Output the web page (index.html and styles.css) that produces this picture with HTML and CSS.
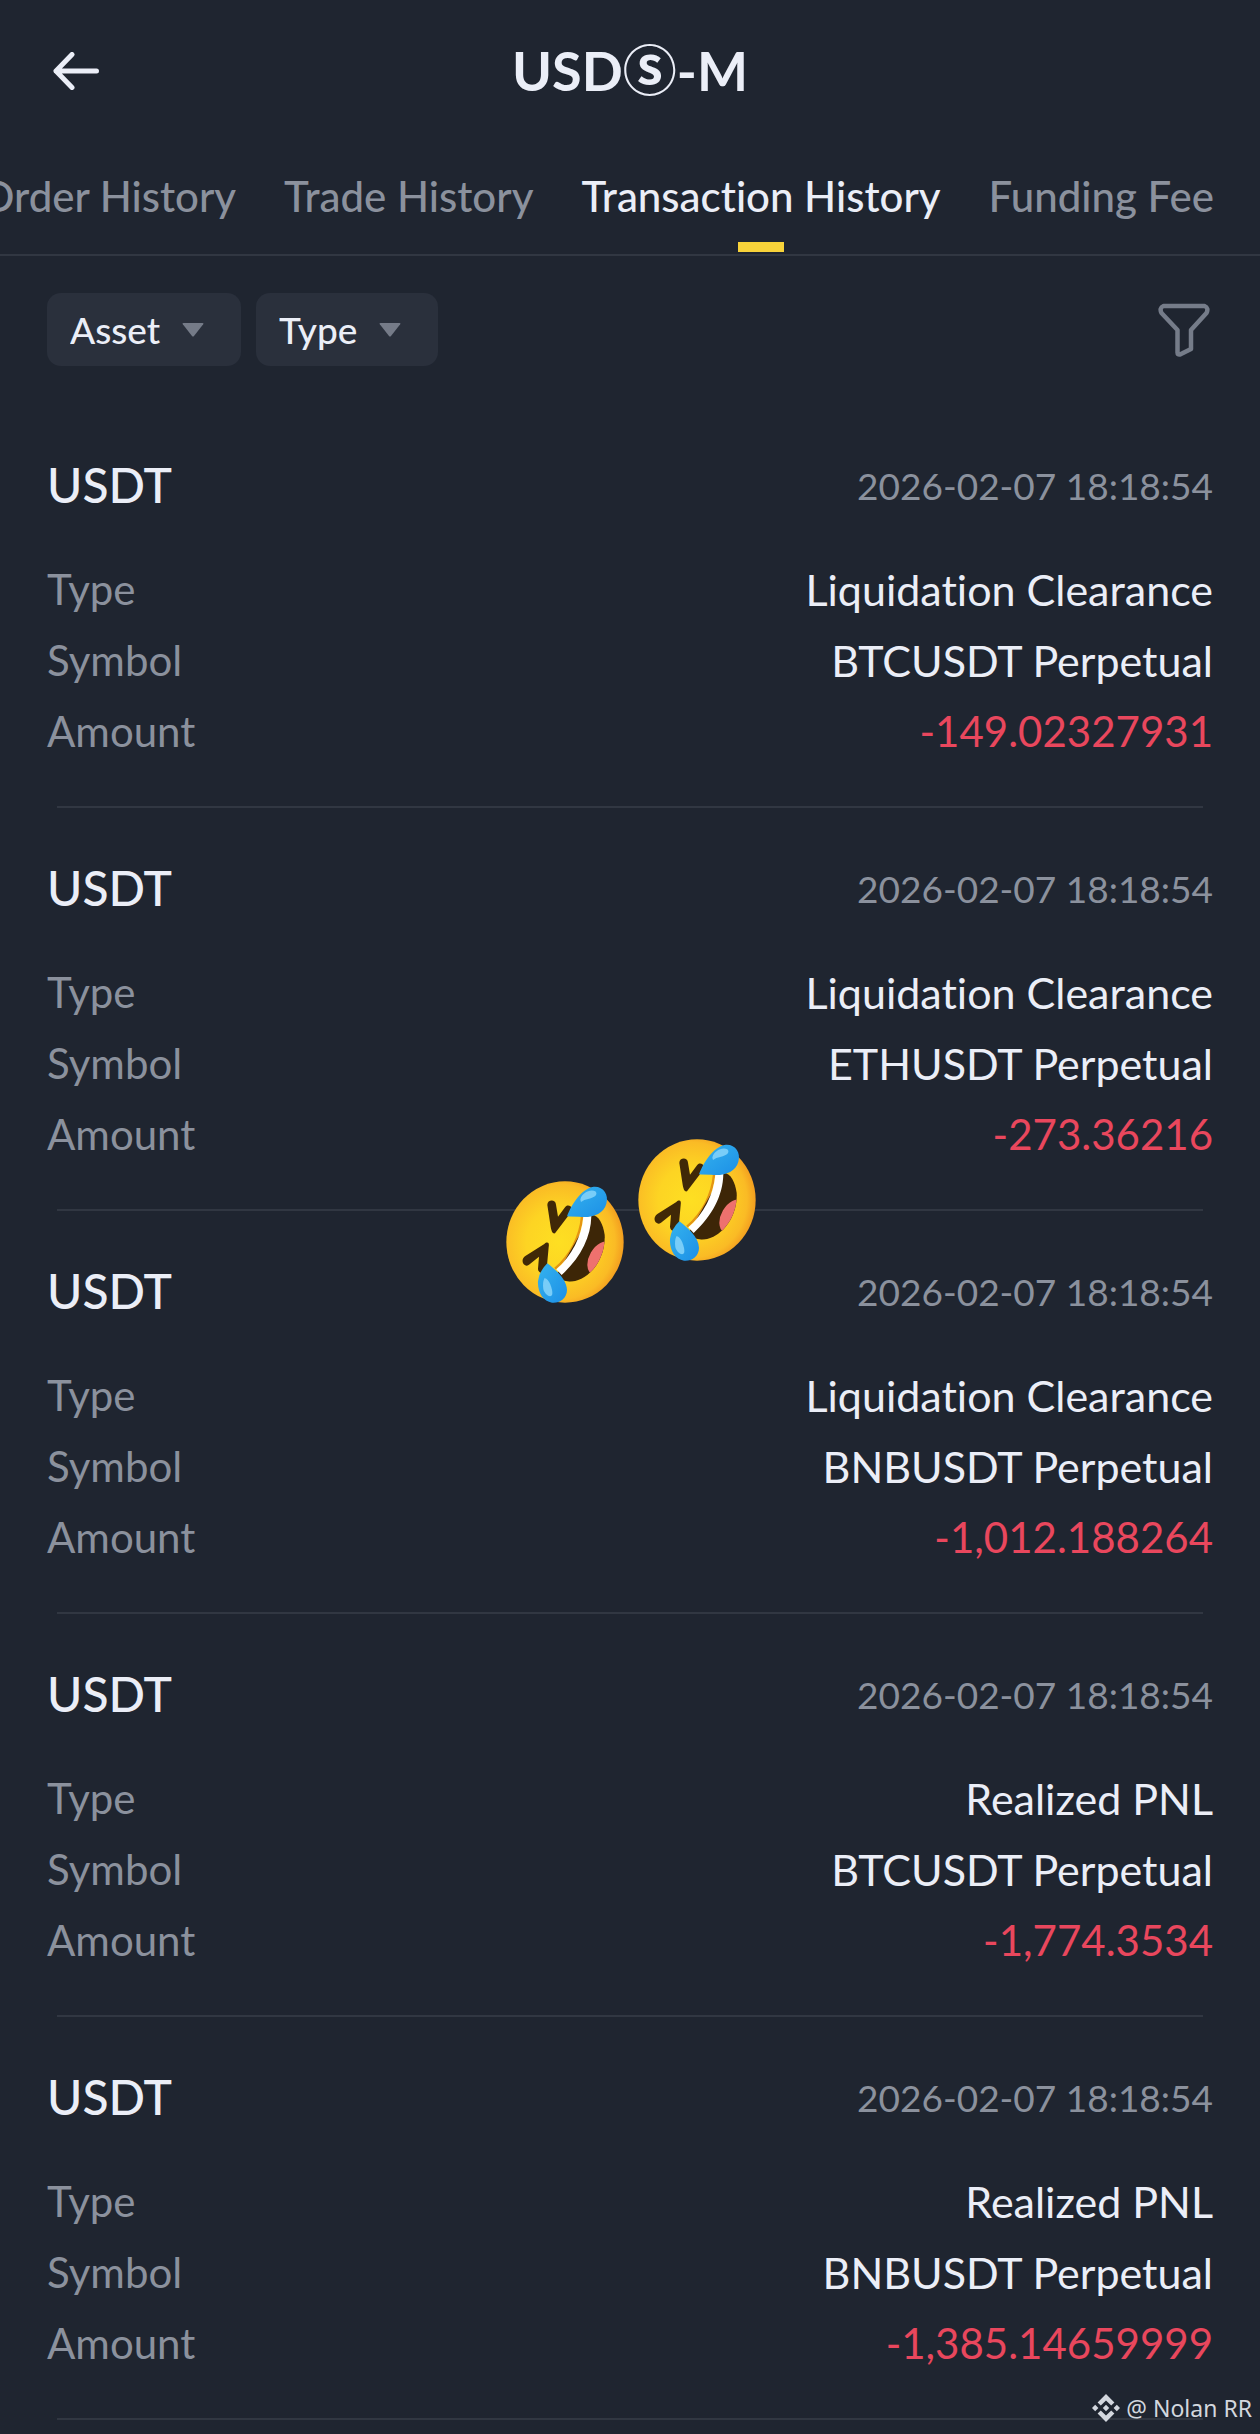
FILE: index.html
```html
<!DOCTYPE html>
<html lang="en">
<head>
    <meta charset="UTF-8">
    <meta name="viewport" content="width=device-width, initial-scale=1.0">
    <title>Transaction History</title>
    <link rel="stylesheet" href="styles.css">
</head>
<body>
    <header class="topbar">
        <button class="back" type="button" aria-label="Back">
            <svg width="46" height="38" viewBox="0 0 46 38" fill="none" stroke="currentColor" stroke-width="5" stroke-linecap="round" stroke-linejoin="round">
                <path d="M43.500 19H3M19 2.5L3 19L19 35.5"/>
            </svg>
        </button>
        <h1 class="title">USDⓈ-M</h1>
    </header>

    <nav class="tabs">
        <a class="tab" href="#order">Order History</a>
        <a class="tab" href="#trade">Trade History</a>
        <a class="tab active" href="#transaction">Transaction History</a>
        <a class="tab" href="#funding">Funding Fee</a>
    </nav>

    <div class="filters">
        <div class="chip">
            <select class="chip-select" aria-label="Asset">
                <option>Asset</option>
            </select>
            <svg class="caret" width="22" height="14" viewBox="0 0 22 14"><path d="M1.5 0h19q1.500 0 .7 1.200L12 13q-1 1.200-2 0L.8 1.200Q0 0 1.500 0z" fill="currentColor"/></svg>
        </div>
        <div class="chip">
            <select class="chip-select" aria-label="Type">
                <option>Type</option>
            </select>
            <svg class="caret" width="22" height="14" viewBox="0 0 22 14"><path d="M1.5 0h19q1.500 0 .7 1.200L12 13q-1 1.200-2 0L.8 1.200Q0 0 1.500 0z" fill="currentColor"/></svg>
        </div>
        <button class="filter-btn" type="button" aria-label="Filter">
            <svg width="52" height="54" viewBox="0 0 52 54" fill="none" stroke="currentColor" stroke-width="4.500" stroke-linejoin="round">
                <path d="M5.500 3H46.500Q51 5 48.500 10L33 27V46L22 51.500Q19.500 52 19.500 49.500V27L3.500 10Q1 5 5.500 3Z"/>
            </svg>
        </button>
    </div>

    <main class="list">
        <article class="record">
            <div class="record-head">
                <h2 class="asset">USDT</h2>
                <time class="time">2026-02-07 18:18:54</time>
            </div>
            <dl class="rows">
                <div class="row"><dt>Type</dt><dd>Liquidation Clearance</dd></div>
                <div class="row"><dt>Symbol</dt><dd>BTCUSDT Perpetual</dd></div>
                <div class="row"><dt>Amount</dt><dd class="loss">-149.02327931</dd></div>
            </dl>
        </article>
        <article class="record">
            <div class="record-head">
                <h2 class="asset">USDT</h2>
                <time class="time">2026-02-07 18:18:54</time>
            </div>
            <dl class="rows">
                <div class="row"><dt>Type</dt><dd>Liquidation Clearance</dd></div>
                <div class="row"><dt>Symbol</dt><dd>ETHUSDT Perpetual</dd></div>
                <div class="row"><dt>Amount</dt><dd class="loss">-273.36216</dd></div>
            </dl>
        </article>
        <article class="record">
            <div class="record-head">
                <h2 class="asset">USDT</h2>
                <time class="time">2026-02-07 18:18:54</time>
            </div>
            <dl class="rows">
                <div class="row"><dt>Type</dt><dd>Liquidation Clearance</dd></div>
                <div class="row"><dt>Symbol</dt><dd>BNBUSDT Perpetual</dd></div>
                <div class="row"><dt>Amount</dt><dd class="loss">-1,012.188264</dd></div>
            </dl>
        </article>
        <article class="record">
            <div class="record-head">
                <h2 class="asset">USDT</h2>
                <time class="time">2026-02-07 18:18:54</time>
            </div>
            <dl class="rows">
                <div class="row"><dt>Type</dt><dd>Realized PNL</dd></div>
                <div class="row"><dt>Symbol</dt><dd>BTCUSDT Perpetual</dd></div>
                <div class="row"><dt>Amount</dt><dd class="loss">-1,774.3534</dd></div>
            </dl>
        </article>
        <article class="record">
            <div class="record-head">
                <h2 class="asset">USDT</h2>
                <time class="time">2026-02-07 18:18:54</time>
            </div>
            <dl class="rows">
                <div class="row"><dt>Type</dt><dd>Realized PNL</dd></div>
                <div class="row"><dt>Symbol</dt><dd>BNBUSDT Perpetual</dd></div>
                <div class="row"><dt>Amount</dt><dd class="loss">-1,385.14659999</dd></div>
            </dl>
        </article>

        <!-- laughing stickers over the list -->
        <svg class="sticker sticker-left" viewBox="49 184 354 366" aria-hidden="true">
            <defs>
                <radialGradient id="face" cx="0.45" cy="0.5" r="0.56">
                    <stop offset="0" stop-color="#fedf22"/>
                    <stop offset="0.5" stop-color="#fdd423"/>
                    <stop offset="0.85" stop-color="#fabb25"/>
                    <stop offset="1" stop-color="#f29a1f"/>
                </radialGradient>
                <linearGradient id="tear" x1="0" y1="0" x2="1" y2="1">
                    <stop offset="0" stop-color="#35b3ee"/>
                    <stop offset="1" stop-color="#1c8fe6"/>
                </linearGradient>
                <clipPath id="mouth">
                    <path d="M304 286C325 282 340 312 345 345C348 402 318 456 275 477C250 488 228 490 212 476L203 462Z"/>
                </clipPath>
                <g id="rofl">
                    <ellipse cx="226" cy="367" rx="176" ry="182" fill="url(#face)"/>
                    <path d="M277 291C272 350 242 408 196 447" fill="none" stroke="#e49412" stroke-width="7"/>
                    <g clip-path="url(#mouth)">
                        <rect x="190" y="270" width="170" height="230" fill="#3d2607"/>
                        <ellipse cx="334" cy="416" rx="35" ry="55" fill="#ee716e" transform="rotate(30 334 416)"/>
                    </g>
                    <path d="M281 291L305 289C304 355 270 416 216 466L200 449C246 409 276 350 281 291Z" fill="#fff"/>
                    <path d="M173 256C173 239 198 238 199 255L205 291L225 264C235 249 254 263 244 278L196 341C188 343 185 332 183 321Z" fill="#402807"/>
                    <path d="M110 438C97 435 94 418 107 409L164 373C172 366 180 367 177 382L171 448C168 465 145 463 145 447L148 411L118 435Q114 438 110 438Z" fill="#402807"/>
                    <path d="M232 290C246 253 275 207 312 201C341 199 358 224 350 252C342 285 302 296 268 291Q244 291 232 290Z" fill="url(#tear)"/>
                    <path d="M272 240C275 221 301 207 317 215C327 225 313 235 298 237Q282 239 274 247Z" fill="#79cdf8"/>
                    <path d="M173 431C195 448 231 477 232 511C231 538 209 551 187 549C160 545 143 518 145 484Q148 455 173 431Z" fill="url(#tear)"/>
                    <path d="M164 476C174 471 190 505 188 524C184 537 166 526 161 509Q158 490 164 476Z" fill="#79cdf8"/>
                </g>
            </defs>
            <use href="#rofl"/>
        </svg>
        <svg class="sticker sticker-right" viewBox="49 184 354 366" aria-hidden="true"><use href="#rofl"/></svg>
    </main>

    <footer class="watermark">
        <svg width="28" height="28" viewBox="0 0 28 28" fill="currentColor">
            <path d="M14 0L22.400 8.400L19.200 11.600L14 6.400L8.800 11.600L5.600 8.400ZM14 28L5.600 19.600L8.800 16.400L14 21.600L19.200 16.400L22.400 19.600ZM14 10.800L17.200 14L14 17.200L10.800 14ZM3.200 10.800L6.400 14L3.200 17.200L0 14ZM24.800 10.800L28 14L24.800 17.200L21.600 14Z"/>
        </svg>
        <span>@ Nolan RR</span>
    </footer>
</body>
</html>
```
FILE: styles.css
```css
* {
    margin: 0;
    padding: 0;
    box-sizing: border-box;
}

body {
    position: relative;
    min-height: 100vh;
    background: #1f2530;
    color: #ebeef7;
    font-family: Lato, "Noto Sans CJK JP", sans-serif;
    font-variant-ligatures: none;
    overflow-x: hidden;
}

button, select {
    background: none;
    border: none;
    color: inherit;
    font: inherit;
    cursor: pointer;
}

svg {
    display: block;
}

.topbar {
    display: grid;
    grid-template-columns: 1fr auto 1fr;
    align-items: center;
    height: 142px;
    padding: 0 53px;
}

.back {
    justify-self: start;
}

.title {
    font-size: 54px;
    line-height: 72px;
    font-weight: 700;
}

.tabs {
    display: flex;
    justify-content: flex-end;
    gap: 48px;
    height: 114px;
    padding: 0 46px;
    border-bottom: 2px solid #313742;
    overflow: hidden;
}

.tab {
    position: relative;
    flex-shrink: 0;
    color: #8b919d;
    font-size: 42px;
    font-weight: 500;
    line-height: 108px;
    text-decoration: none;
    white-space: nowrap;
}

.tab.active {
    color: #ebeef7;
}

.tab.active::after {
    content: "";
    position: absolute;
    left: 50%;
    bottom: 2px;
    width: 46px;
    height: 10px;
    margin-left: -23px;
    background: #f8d33a;
}

.filters {
    display: flex;
    align-items: center;
    gap: 15px;
    padding: 37px 50px 39px 47px;
}

.chip {
    position: relative;
    border-radius: 14px;
    background: #2a303c;
}

.chip-select {
    appearance: none;
    height: 73px;
    padding: 0 80px 0 23px;
    border-radius: 14px;
    font-size: 37px;
    font-weight: 500;
}

.caret {
    position: absolute;
    top: 30px;
    right: 37px;
    color: #757b88;
    pointer-events: none;
}

.filter-btn {
    margin-left: auto;
    color: #757c89;
}

.list {
    position: relative;
}

.record {
    position: relative;
    padding: 44px 47px 41px;
}

.record::after {
    content: "";
    position: absolute;
    left: 57px;
    right: 57px;
    bottom: 0;
    height: 2px;
    background: #313742;
}

.record-head {
    display: flex;
    align-items: center;
    justify-content: space-between;
    margin-bottom: 33px;
}

.asset {
    font-size: 48px;
    font-weight: 500;
    line-height: 72px;
}

.time {
    color: #8b919d;
    font-size: 37px;
}

.row {
    display: flex;
    justify-content: space-between;
    font-size: 42px;
    line-height: 71px;
}

.row dt {
    color: #8b919d;
}

.row dd {
    font-size: 43px;
}

.row .loss {
    color: #e9475d;
    font-size: 42px;
}

.sticker {
    position: absolute;
    width: 118px;
    height: 122px;
}

.sticker-left {
    top: 776px;
    left: calc(50% - 124px);
}

.sticker-right {
    top: 734px;
    left: calc(50% + 8px);
}

.watermark {
    position: absolute;
    right: 8px;
    bottom: 8px;
    display: flex;
    align-items: center;
    gap: 6px;
    color: #d3d7de;
    font-family: "Noto Sans", sans-serif;
    font-size: 23px;
    line-height: 36px;
}
```
